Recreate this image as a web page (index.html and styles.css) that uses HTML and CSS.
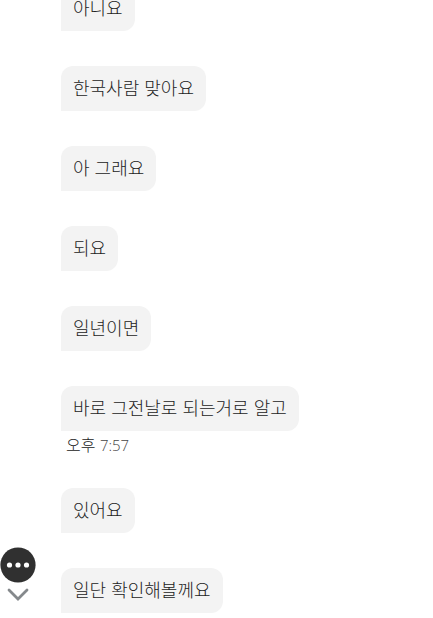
FILE: index.html
```html
<!DOCTYPE html>
<html lang="ko">
<head>
    <meta charset="UTF-8">
    <meta name="viewport" content="width=device-width, initial-scale=1.0">
    <title>채팅</title>
    <link rel="stylesheet" href="styles.css">
</head>
<body>
    <main class="chat">
        <div class="message"><p class="bubble">아니요</p></div>
        <div class="message"><p class="bubble">한국사람 맞아요</p></div>
        <div class="message"><p class="bubble">아 그래요</p></div>
        <div class="message"><p class="bubble">되요</p></div>
        <div class="message"><p class="bubble">일년이면</p></div>
        <div class="message">
            <p class="bubble">바로 그전날로 되는거로 알고</p>
            <time class="time" datetime="19:57">오후 <span class="clock">7:57</span></time>
        </div>
        <div class="message"><p class="bubble">있어요</p></div>
        <div class="message"><p class="bubble">일단 확인해볼께요</p></div>
    </main>
    <div class="float-menu">
        <button class="more-btn" type="button" aria-label="더보기">
            <svg width="36" height="36" viewBox="0 0 36 36">
                <circle cx="18" cy="18" r="17.6" fill="#303030"/>
                <circle cx="9.5" cy="18" r="2.6" fill="#fff"/>
                <circle cx="18" cy="18" r="2.6" fill="#fff"/>
                <circle cx="26.5" cy="18" r="2.6" fill="#fff"/>
            </svg>
        </button>
        <button class="down-btn" type="button" aria-label="아래로">
            <svg width="36" height="24" viewBox="0 0 36 24">
                <path d="M9 7l9 9 9-9" fill="none" stroke="#85898c" stroke-width="2.8" stroke-linecap="round"/>
            </svg>
        </button>
    </div>
</body>
</html>
```
FILE: styles.css
```css
*{box-sizing:border-box}
body{margin:0;background:#fff;color:#222;font-family:"Noto Sans CJK KR",sans-serif;font-weight:300}
.chat{display:flex;flex-direction:column;justify-content:flex-end;gap:35px;height:100vh;padding:0 16px 5px 61px;overflow:hidden}
.message{display:flex;flex-direction:column;align-items:flex-start;flex-shrink:0}
.bubble{margin:0;padding:9px 12px 12px;background:#f3f3f3;border-radius:12px 12px 12px 0;font-size:18px;line-height:24px}
.time{padding:5px 5px 0;font-size:16px;line-height:16px}
.clock{font-family:"Open Sans",sans-serif;font-size:15px;color:#444}
.float-menu{position:fixed;left:0;bottom:11px;display:flex;flex-direction:column}
.more-btn,.down-btn{padding:0;border:none;background:none;cursor:pointer}
.more-btn svg,.down-btn svg{display:block}
```
